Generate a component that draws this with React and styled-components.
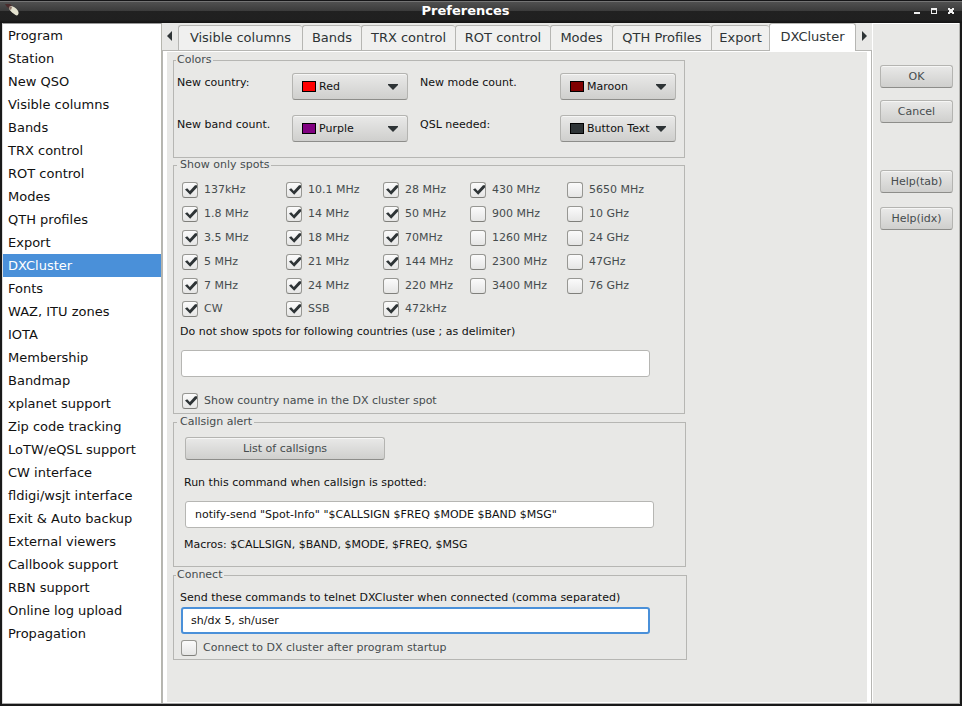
import React from "react";
import styled, { createGlobalStyle, css } from "styled-components";

const GlobalStyle = createGlobalStyle`
  *, *::before, *::after { box-sizing: border-box; }
  body { margin: 0; background: #191919; }
  body, button, input, select {
    font-family: "DejaVu Sans", sans-serif;
    font-size: 11px;
    color: #111;
  }
`;

const line = "#b6b6b3";
const surface = "#e8e8e6";
const ink = "#2e3436";

const Window = styled.div`
  display: flex;
  flex-direction: column;
  min-height: 100vh;
  padding: 0 2px 2px;
  background: #191919;
`;

const TitleBar = styled.header`
  display: flex;
  align-items: center;
  height: 23px;
  margin: 0 -2px;
  padding: 0 2px 2px 4px;
  background: linear-gradient(#151517 0 1px, #747474 1px 2px, #505050 2px, #3b3b3b 11px, #212121 11px, #202020 20px, #121212);
`;

const Title = styled.h1`
  flex: 1;
  margin: 0;
  text-align: center;
  font-size: 13px;
  line-height: 20px;
  font-weight: bold;
  color: #fff;
`;

const WindowButton = styled.button`
  width: 17px;
  height: 17px;
  padding: 1px 0 0 4px;
  border: 0;
  background: none;
  svg { display: block; }
`;

const Body = styled.div`
  display: flex;
  flex: 1;
  background: ${surface};
  border-right: 1px solid ${line};
  border-bottom: 1px solid #aaa;
`;

const Sidebar = styled.nav`
  flex: 0 0 160px;
  background: #fff;
  border-top: 1px solid #999;
  border-left: 1px solid #ddd;
  border-right: 1px solid #b6b6ae;
`;

const SidebarItem = styled.a`
  display: block;
  padding-left: 5px;
  font-size: 13px;
  line-height: 23px;
  text-decoration: none;
  white-space: nowrap;
  color: ${(p) => (p.$active ? "#fff" : "#111")};
  background: ${(p) => (p.$active ? "#4a90d9" : "transparent")};
`;

const Notebook = styled.main`
  display: flex;
  flex: 1;
  flex-direction: column;
  min-width: 0;
`;

const TabBar = styled.div`
  display: flex;
  align-items: flex-end;
  height: 28px;
  border-bottom: 1px solid ${line};
`;

const TabArrow = styled.button`
  flex: 0 0 16px;
  height: 27px;
  padding: 0 0 1px 5px;
  border: 0;
  background: none;
  svg { display: block; }
`;

const Tab = styled.button`
  flex: 0 0 auto;
  width: ${(p) => p.$width}px;
  height: 25px;
  padding: 0 0 1px;
  font-size: 13px;
  color: ${ink};
  white-space: nowrap;
  background: #f0f0ef;
  border: 1px solid ${line};
  border-width: 1px 0 0 1px;
  border-radius: 3px 3px 0 0;
  ${(p) =>
    p.$active &&
    css`
      height: 28px;
      margin-bottom: -1px;
      padding-bottom: 2px;
      background: #fff;
      border-right-width: 1px;
    `}
`;

const Panel = styled.div`
  flex: 1;
  padding: 1px 4px 1px;
  background: #fff;
  border-left: 1px solid ${line};
  border-right: 1px solid ${line};
`;

const Page = styled.div`
  min-height: 100%;
  padding: 2px 6px;
  background: ${surface};
`;

const Group = styled.fieldset`
  min-width: 0;
  max-width: ${(p) => p.$width}px;
  margin: 0 0 ${(p) => p.$gap}px;
  padding: 0 0 ${(p) => p.$bottom}px;
  border: 1px solid ${line};
`;

const Legend = styled.legend`
  margin-left: ${(p) => (p.$inset ? 3 : 2)}px;
  padding: 0 2px 2px ${(p) => (p.$inset ? 3 : 1)}px;
  line-height: 11px;
  color: #464c4e;
`;

const Caption = styled.label`
  display: block;
  height: 12px;
  line-height: 13px;
  overflow: hidden;
  white-space: nowrap;
`;

const ColorGrid = styled.div`
  display: grid;
  grid-template-columns: 115px 128px 140px 116px;
  row-gap: 15px;
  padding: 6px 0 0 3px;
`;

const ColorCaption = styled(Caption)`
  margin-top: 3px;
`;

const ColorPicker = styled.div`
  position: relative;
  width: 116px;
`;

const raised = css`
  border: 1px solid #b4b4b1;
  border-bottom-color: #8d8d8a;
  border-radius: 3px;
  background: linear-gradient(#e9e9e8, #cfcfcd);
  box-shadow: inset 0 1px #f6f6f5;
`;

const ColorSelect = styled.select`
  ${raised}
  display: block;
  width: 100%;
  height: 27px;
  padding: 0 20px 0 26px;
  appearance: none;
`;

const Swatch = styled.span`
  position: absolute;
  top: 8px;
  left: 10px;
  width: 14px;
  height: 11px;
  border: 1px solid #000;
  background: ${(p) => p.$color};
  pointer-events: none;
`;

const SelectArrow = styled.svg`
  position: absolute;
  top: 11px;
  right: 10px;
  pointer-events: none;
`;

const PushButton = styled.button`
  ${raised}
  display: block;
  width: ${(p) => (p.$wide ? "200px" : "100%")};
  height: 23px;
  padding: 0 0 1px;
  color: #464c4e;
`;

const BandGrid = styled.div`
  display: grid;
  grid-template-columns: 104px 97px 87px 97px auto;
  grid-template-rows: repeat(4, 24px) 23px 16px;
  padding: 10px 0 0 8px;
`;

const Check = styled.label`
  display: flex;
  align-items: center;
  gap: 6px;
  height: 16px;
  line-height: 14px;
  white-space: nowrap;
  color: #464c4e;
`;

const Box = styled.input`
  flex: none;
  width: 16px;
  height: 16px;
  margin: 0;
  appearance: none;
  border: 1px solid #979793;
  border-bottom-color: #7f7f7b;
  border-radius: 3px;
  background: linear-gradient(#fbfbfb, #e6e6e5);
`;

const BoxFrame = styled.span`
  display: grid;
  flex: none;
  > * { grid-area: 1 / 1; }
  svg { display: none; pointer-events: none; z-index: 1; }
  input:checked + svg { display: block; }
`;

const Stack = styled.div`
  padding: ${(p) => p.$top}px 0 0 ${(p) => p.$left}px;
`;

const TextField = styled.input`
  display: block;
  width: 469px;
  max-width: 100%;
  height: 27px;
  padding: 0 9px 1px;
  border: 1px solid ${line};
  border-radius: 3px;
  background: #fff;
  outline: 0;
  ${(p) =>
    p.$active &&
    css`
      padding: 0 8px 1px;
      border: 2px solid #4a90d9;
    `}
`;

const Actions = styled.aside`
  display: flex;
  flex: 0 0 87px;
  flex-direction: column;
  gap: 12px;
  padding: 41px 6px 0 7px;
  border-left: 1px solid #fff;
  border-top: 1px solid #fff;
`;

const HelpActions = styled.div`
  display: flex;
  flex-direction: column;
  gap: 14px;
  margin-top: 35px;
`;

const sections = [
  "Program", "Station", "New QSO", "Visible columns", "Bands", "TRX control", "ROT control",
  "Modes", "QTH profiles", "Export", "DXCluster", "Fonts", "WAZ, ITU zones", "IOTA",
  "Membership", "Bandmap", "xplanet support", "Zip code tracking", "LoTW/eQSL support",
  "CW interface", "fldigi/wsjt interface", "Exit & Auto backup", "External viewers",
  "Callbook support", "RBN support", "Online log upload", "Propagation",
];

const tabs = [
  ["Visible columns", 124], ["Bands", 59], ["TRX control", 94], ["ROT control", 95],
  ["Modes", 62], ["QTH Profiles", 99], ["Export", 58], ["DXCluster", 87],
];

const colors = [
  ["New country:", "Red", "#ff0000"],
  ["New mode count.", "Maroon", "#800000"],
  ["New band count.", "Purple", "#800080"],
  ["QSL needed:", "Button Text", ink],
];

const bands = [
  ["137kHz", 1], ["10.1 MHz", 1], ["28 MHz", 1], ["430 MHz", 1], ["5650 MHz", 0],
  ["1.8 MHz", 1], ["14 MHz", 1], ["50 MHz", 1], ["900 MHz", 0], ["10 GHz", 0],
  ["3.5 MHz", 1], ["18 MHz", 1], ["70MHz", 1], ["1260 MHz", 0], ["24 GHz", 0],
  ["5 MHz", 1], ["21 MHz", 1], ["144 MHz", 1], ["2300 MHz", 0], ["47GHz", 0],
  ["7 MHz", 1], ["24 MHz", 1], ["220 MHz", 0], ["3400 MHz", 0], ["76 GHz", 0],
  ["CW", 1], ["SSB", 1], ["472kHz", 1],
];

function CheckItem({ children, checked }) {
  return (
    <Check>
      <BoxFrame>
        <Box type="checkbox" defaultChecked={checked} />
        <svg width="16" height="16" viewBox="0 0 16 16">
          <path d="M3 7.5 5.2 6.2 7.8 9 13 3.2 15 3.2 15 5.4 8.2 12.8Z" fill={ink} />
        </svg>
      </BoxFrame>
      {children}
    </Check>
  );
}

function ColorChoice({ label, value, color }) {
  const id = value.toLowerCase().replace(" ", "-");
  return (
    <>
      <ColorCaption htmlFor={id}>{label}</ColorCaption>
      <ColorPicker>
        <ColorSelect id={id} defaultValue={value}>
          {colors.map(([, name]) => (
            <option key={name}>{name}</option>
          ))}
        </ColorSelect>
        <Swatch $color={color} />
        <SelectArrow width="10" height="6" viewBox="0 0 10 6">
          <path d="M0 0H10V1L5 6 0 1Z" fill={ink} />
        </SelectArrow>
      </ColorPicker>
    </>
  );
}

function Feather() {
  return (
    <svg width="18" height="15" viewBox="0 0 18 15">
      <path d="M1 1 6 1 9 4 7 6 3 4Z" fill="#4a2c2c" />
      <path d="M5 4C8 2 13 5 14.500 9 15 12 13 13 11.500 12 9 10 5 8 5 4Z" fill="#e4e2cf" />
      <path d="M5 4 8 4 7 7 5.500 6Z" fill="#8d7468" />
    </svg>
  );
}

export default function App() {
  return (
    <Window>
      <GlobalStyle />
      <TitleBar>
        <Feather />
        <Title>Preferences</Title>
        <WindowButton aria-label="Minimize">
          <svg width="8" height="8" viewBox="0 0 8 8"><path d="M1 5H7V7H1Z" fill="#eee" /></svg>
        </WindowButton>
        <WindowButton aria-label="Maximize">
          <svg width="8" height="8" viewBox="0 0 8 8"><path d="M1 1H7V7H1ZM2 3V6H6V3Z" fillRule="evenodd" fill="#eee" /></svg>
        </WindowButton>
        <WindowButton aria-label="Close">
          <svg width="8" height="8" viewBox="0 0 8 8"><path d="M1 1H3V2H5V1H7V3H6V5H7V7H5V6H3V7H1V5H2V3H1Z" fill="#eee" /></svg>
        </WindowButton>
      </TitleBar>
      <Body>
        <Sidebar>
          {sections.map((name) => (
            <SidebarItem key={name} href="#" $active={name === "DXCluster"}>{name}</SidebarItem>
          ))}
        </Sidebar>
        <Notebook>
          <TabBar>
            <TabArrow aria-label="Previous tabs">
              <svg width="6" height="10" viewBox="0 0 6 10"><path d="M5 0V10L0 5Z" fill={ink} /></svg>
            </TabArrow>
            {tabs.map(([name, width]) => (
              <Tab key={name} $width={width} $active={name === "DXCluster"}>{name}</Tab>
            ))}
            <TabArrow aria-label="Next tabs">
              <svg width="6" height="10" viewBox="0 0 6 10"><path d="M1 0V10L6 5Z" fill={ink} /></svg>
            </TabArrow>
          </TabBar>
          <Panel>
            <Page>
              <Group $width={512} $gap={1} $bottom={15}>
                <Legend>Colors</Legend>
                <ColorGrid>
                  {colors.map(([label, value, color]) => (
                    <ColorChoice key={value} label={label} value={value} color={color} />
                  ))}
                </ColorGrid>
              </Group>
              <Group $width={512} $gap={2} $bottom={4}>
                <Legend $inset>Show only spots</Legend>
                <BandGrid>
                  {bands.map(([name, on]) => (
                    <CheckItem key={name} checked={!!on}>{name}</CheckItem>
                  ))}
                </BandGrid>
                <Stack $top={8} $left={6}>
                  <Caption htmlFor="countries">Do not show spots for following countries (use ; as delimiter)</Caption>
                </Stack>
                <Stack $top={13} $left={7}>
                  <TextField id="countries" />
                </Stack>
                <Stack $top={16} $left={8}>
                  <CheckItem checked>Show country name in the DX cluster spot</CheckItem>
                </Stack>
              </Group>
              <Group $width={513} $gap={2} $bottom={16}>
                <Legend $inset>Callsign alert</Legend>
                <Stack $top={8} $left={11}>
                  <PushButton $wide>List of callsigns</PushButton>
                </Stack>
                <Stack $top={16} $left={10}>
                  <Caption htmlFor="command">Run this command when callsign is spotted:</Caption>
                </Stack>
                <Stack $top={13} $left={11}>
                  <TextField id="command" defaultValue={'notify-send "Spot-Info" "$CALLSIGN $FREQ $MODE $BAND $MSG"'} />
                </Stack>
                <Stack $top={10} $left={10}>
                  <Caption as="div">Macros: $CALLSIGN, $BAND, $MODE, $FREQ, $MSG</Caption>
                </Stack>
              </Group>
              <Group $width={514} $gap={0} $bottom={3}>
                <Legend>Connect</Legend>
                <Stack $top={9} $left={6}>
                  <Caption htmlFor="connect">Send these commands to telnet DXCluster when connected (comma separated)</Caption>
                </Stack>
                <Stack $top={4} $left={7}>
                  <TextField id="connect" $active defaultValue="sh/dx 5, sh/user" />
                </Stack>
                <Stack $top={6} $left={7}>
                  <CheckItem>Connect to DX cluster after program startup</CheckItem>
                </Stack>
              </Group>
            </Page>
          </Panel>
        </Notebook>
        <Actions>
          <PushButton>OK</PushButton>
          <PushButton>Cancel</PushButton>
          <HelpActions>
            <PushButton>Help(tab)</PushButton>
            <PushButton>Help(idx)</PushButton>
          </HelpActions>
        </Actions>
      </Body>
    </Window>
  );
}
